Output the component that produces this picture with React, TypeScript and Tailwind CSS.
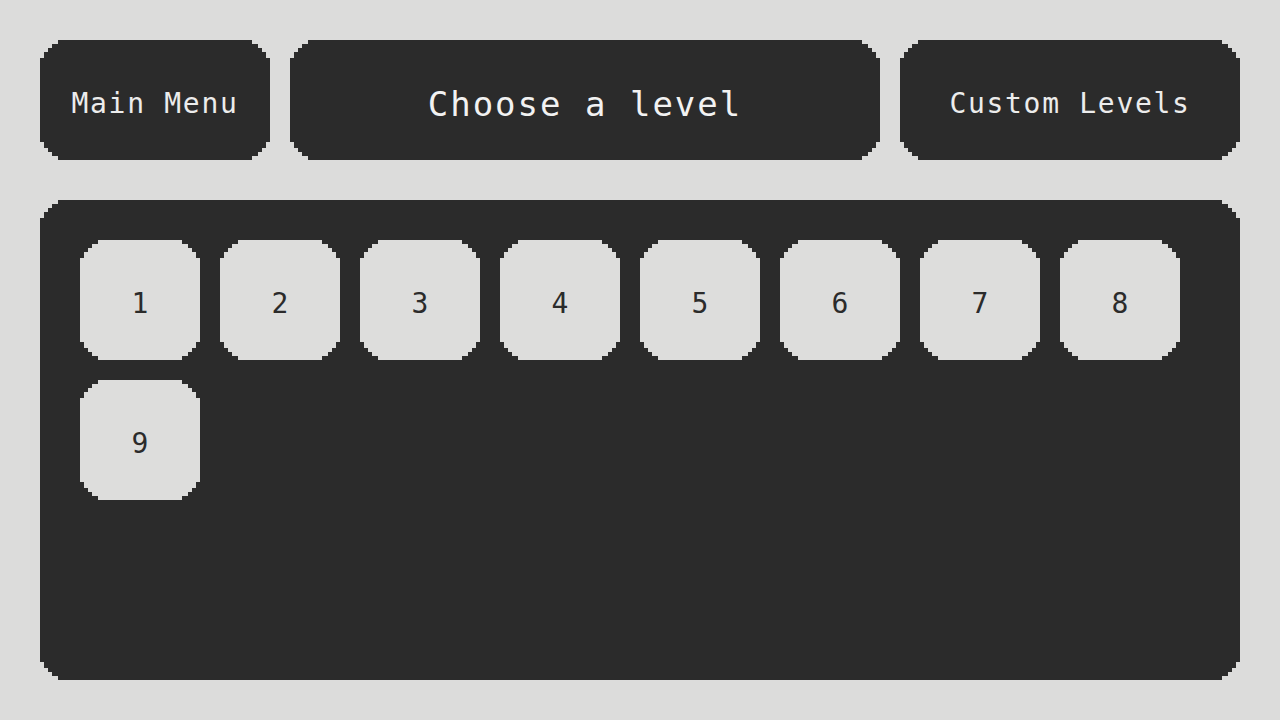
import React from "react";

// stepped "pixel" corners shared by every panel and tile
const pixelCorners =
  "[clip-path:polygon(18px_0,calc(100%_-_18px)_0,calc(100%_-_18px)_4px,calc(100%_-_12px)_4px,calc(100%_-_12px)_8px,calc(100%_-_8px)_8px,calc(100%_-_8px)_12px,calc(100%_-_4px)_12px,calc(100%_-_4px)_18px,100%_18px,100%_calc(100%_-_18px),calc(100%_-_4px)_calc(100%_-_18px),calc(100%_-_4px)_calc(100%_-_12px),calc(100%_-_8px)_calc(100%_-_12px),calc(100%_-_8px)_calc(100%_-_8px),calc(100%_-_12px)_calc(100%_-_8px),calc(100%_-_12px)_calc(100%_-_4px),calc(100%_-_18px)_calc(100%_-_4px),calc(100%_-_18px)_100%,18px_100%,18px_calc(100%_-_4px),12px_calc(100%_-_4px),12px_calc(100%_-_8px),8px_calc(100%_-_8px),8px_calc(100%_-_12px),4px_calc(100%_-_12px),4px_calc(100%_-_18px),0_calc(100%_-_18px),0_18px,4px_18px,4px_12px,8px_12px,8px_8px,12px_8px,12px_4px,18px_4px)]";

const levels = [1, 2, 3, 4, 5, 6, 7, 8, 9];

export default function App() {
  return (
    <div className="w-[1280px] h-[720px] bg-[#dcdcdb] p-10 flex flex-col gap-10 font-['DejaVu_Sans_Mono',monospace]">
      <div className="flex gap-5 h-[120px]">
        <button className={`${pixelCorners} w-[230px] bg-[#2b2b2b] text-[#ececec] text-[28px] tracking-[1.7px] flex items-center justify-center pt-2`}>
          Main Menu
        </button>
        <div className={`${pixelCorners} flex-1 bg-[#2b2b2b] text-[#f2f2f2] text-[34px] tracking-[2px] flex items-center justify-center pt-2`}>
          Choose a level
        </div>
        <button className={`${pixelCorners} w-[340px] bg-[#2b2b2b] text-[#ececec] text-[28px] tracking-[1.7px] flex items-center justify-center pt-2`}>
          Custom Levels
        </button>
      </div>

      <div className={`${pixelCorners} flex-1 bg-[#2b2b2b] p-10`}>
        <div className="grid grid-cols-[repeat(8,120px)] auto-rows-[120px] gap-5">
          {levels.map((n) => (
            <button
              key={n}
              className={`${pixelCorners} bg-[#dddddc] text-[#2b2b2b] text-[28px] flex items-center justify-center pt-2`}
            >
              {n}
            </button>
          ))}
        </div>
      </div>
    </div>
  );
}
